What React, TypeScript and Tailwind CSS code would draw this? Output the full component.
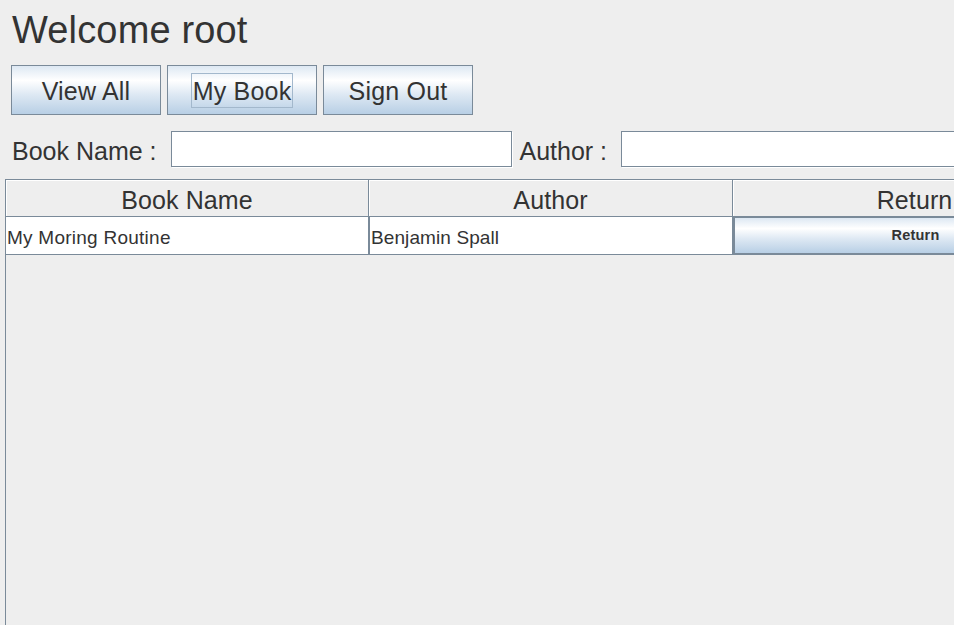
const buttonBg =
  'bg-[linear-gradient(to_bottom,#dde8f3_0%,#ffffff_30%,#dde8f3_60%,#b8cfe5_100%)]'

function ToolButton({ label, focused }: { label: string; focused?: boolean }) {
  return (
    <div
      className={`w-[150px] h-[50px] shrink-0 border border-[#7a8a99] ${buttonBg} flex items-center justify-center text-[25px] tracking-[0.2px]`}
    >
      <span
        className={`border px-[1px] pt-[2px] leading-[31px] ${
          focused ? 'border-[#a3b8cc]' : 'border-transparent'
        }`}
      >
        {label}
      </span>
    </div>
  )
}

function SearchField({ label }: { label: string }) {
  return (
    <div className="flex items-center">
      <span className="pt-[4px] leading-[25px] text-[25px]">{label}</span>
      <div className="ml-[14px] w-[341px] h-[36px] shrink-0 bg-white border border-[#7a8a99] shadow-[1px_1px_0_#ffffff]" />
    </div>
  )
}

export default function App() {
  const headers = ['Book Name', 'Author', 'Return']

  return (
    <div className="w-[954px] h-[625px] overflow-hidden bg-[#eeeeee] text-[#333333] font-['Liberation_Sans',Arial,sans-serif] flex flex-col">
      {/* title */}
      <div className="pl-[12px] pt-[11px] h-[49px] text-[38px] leading-[38px] tracking-[0.15px] shrink-0">Welcome root</div>

      {/* nav buttons */}
      <div className="mt-[16px] pl-[11px] flex gap-[6px] shrink-0">
        <ToolButton label="View All" />
        <ToolButton label="My Book" focused />
        <ToolButton label="Sign Out" />
      </div>

      {/* search */}
      <div className="mt-[16px] pl-[12px] flex gap-[8px] shrink-0 w-[1100px]">
        <SearchField label="Book Name :" />
        <SearchField label="Author :" />
      </div>

      {/* table */}
      <div className="mt-[12px] ml-[5px] w-[1100px] flex-1 border-l border-t border-[#7a8a99]">
        <div className="flex h-[37px] border-b border-[#7a8a99]">
          {headers.map((h, i) => (
            <div
              key={h}
              className={`${i === 0 ? 'w-[363px]' : 'w-[364px]'} shrink-0 border-r border-[#7a8a99] shadow-[inset_1px_1px_0_#ffffff] flex items-center justify-center text-[25px] leading-[25px] pt-[5px] tracking-[0.1px]`}
            >
              {h}
            </div>
          ))}
        </div>

        <div className="flex h-[38px] border-b border-[#7a8a99]">
          <div className="w-[363px] shrink-0 bg-white border-r border-[#7a8a99] flex items-center pl-[1px] pt-[3px] text-[19px] leading-[19px] tracking-[0.25px]">
            My Moring Routine
          </div>
          <div className="w-[364px] shrink-0 bg-white border-x border-[#7a8a99] flex items-center pl-[1px] pt-[3px] text-[19px] leading-[19px] tracking-[0.1px]">
            Benjamin Spall
          </div>
          <div className="w-[364px] shrink-0 border-l border-[#7a8a99] flex">
            <div
              className={`flex-1 border border-[#7a8a99] ${buttonBg} flex items-center justify-center font-bold text-[14.5px] tracking-[0.2px]`}
            >
              Return
            </div>
          </div>
        </div>
      </div>
    </div>
  )
}
